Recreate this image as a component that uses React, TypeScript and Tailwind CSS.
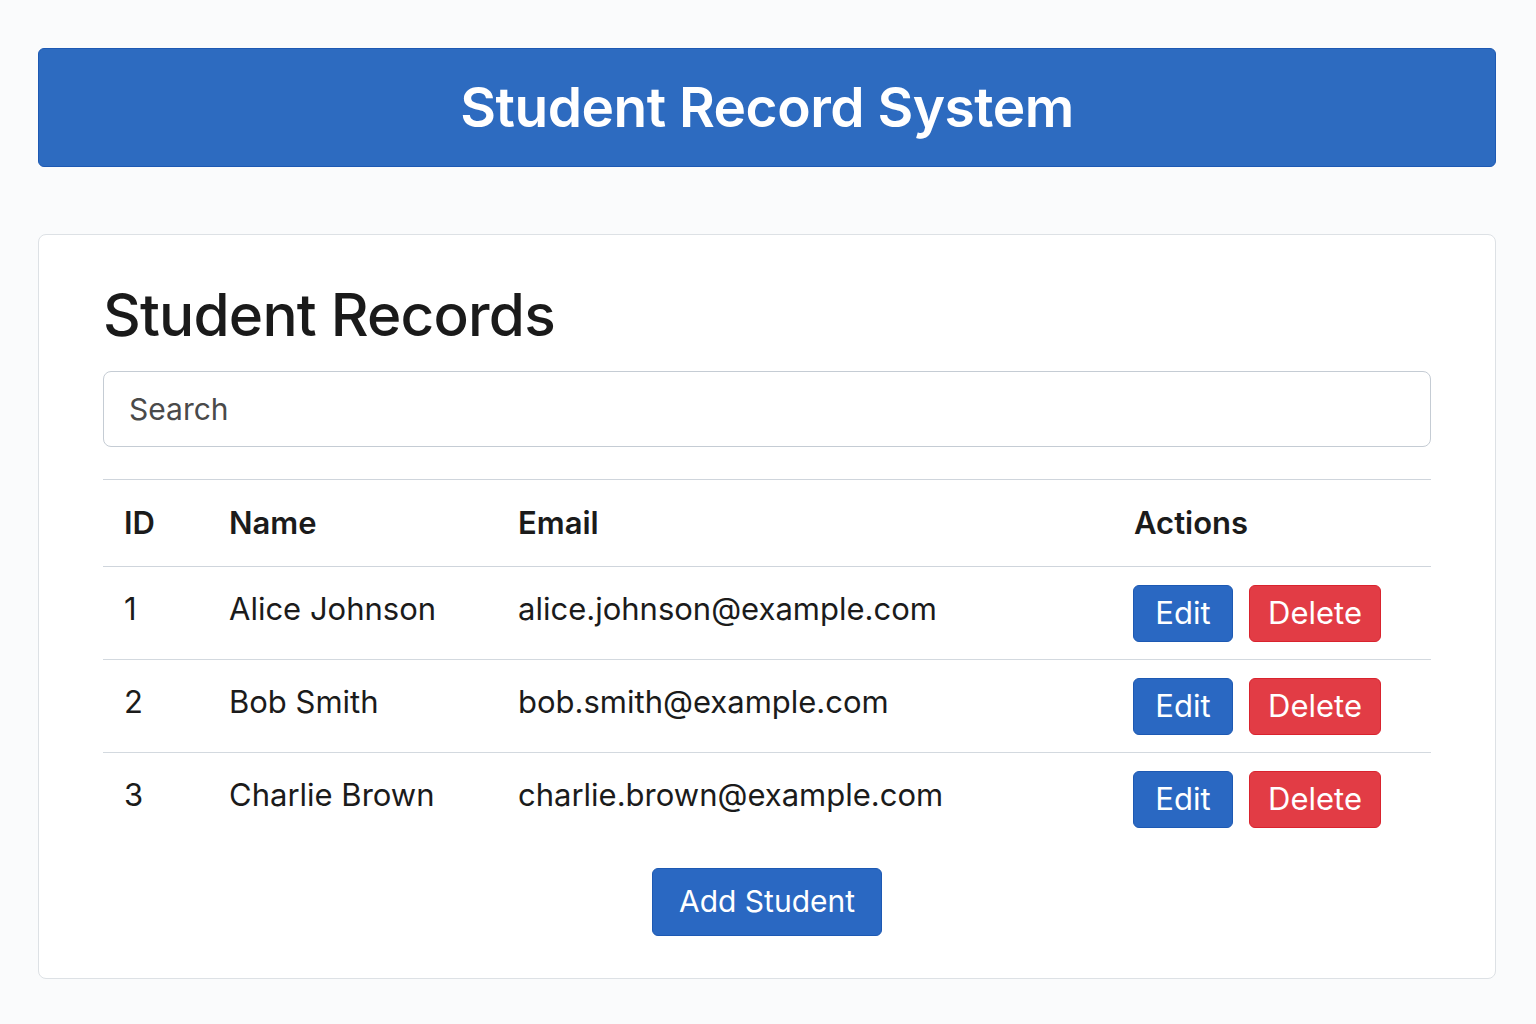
const students = [
    { id: 1, name: 'Alice Johnson', email: 'alice.johnson@example.com' },
    { id: 2, name: 'Bob Smith', email: 'bob.smith@example.com' },
    { id: 3, name: 'Charlie Brown', email: 'charlie.brown@example.com' },
];

export default function App() {
    return (
        <div className="min-h-screen bg-[#fafbfc] pl-[38px] pr-[40px] pt-[48px] pb-[46px] font-['Inter',_sans-serif] text-[#1b1b1b]">
            <header className="h-[119px] flex items-center justify-center rounded-[6px] border border-[#1d59b3] bg-[#2d6bc0]">
                <h1 className="text-[55px] font-semibold tracking-[-0.5px] text-white">Student Record System</h1>
            </header>

            <main className="mt-[67px] rounded-[8px] border border-[#dde1e5] bg-white px-[64px] pt-[44px] pb-[42px]">
                <h2 className="text-[58.5px] leading-[72px] font-medium tracking-[-0.8px] text-[#1a1a1a]">Student Records</h2>

                <input
                    type="text"
                    placeholder="Search"
                    className="mt-[20px] block w-full h-[76px] rounded-[8px] border border-[#c5ccd4] px-[25px] text-[30px] text-[#444] placeholder:text-[#4a4a4a] outline-none"
                />

                <table className="mt-[32px] w-full border-collapse text-[31px]">
                    <colgroup>
                        <col className="w-[105px]" />
                        <col className="w-[289px]" />
                        <col className="w-[616px]" />
                        <col />
                    </colgroup>
                    <thead>
                        <tr className="h-[87px] border-t border-b border-[#cfd5dc] text-left">
                            <th className="pl-[21px] font-semibold">ID</th>
                            <th className="pl-[21px] font-semibold">Name</th>
                            <th className="pl-[21px] font-semibold">Email</th>
                            <th className="pl-[21px] font-semibold">Actions</th>
                        </tr>
                    </thead>
                    <tbody>
                        {students.map((s, i) => (
                            <tr key={s.id} className={i < students.length - 1 ? 'h-[93px] border-b border-[#d3d9df]' : 'h-[93px]'}>
                                <td className="pl-[21px] pb-[8px]">{s.id}</td>
                                <td className="pl-[21px] pb-[8px]">{s.name}</td>
                                <td className="pl-[21px] pb-[8px]">{s.email}</td>
                                <td className="pl-[20px]">
                                    <div className="flex gap-[16px]">
                                        <button className="h-[57px] w-[100px] rounded-[6px] border border-[#1d59b3] bg-[#2a68c2] text-white">Edit</button>
                                        <button className="h-[57px] w-[132px] rounded-[6px] border border-[#d9232e] bg-[#e23c45] text-white">Delete</button>
                                    </div>
                                </td>
                            </tr>
                        ))}
                    </tbody>
                </table>

                <div className="mt-[22px] flex justify-center">
                    <button className="h-[68px] w-[230px] rounded-[6px] border border-[#1d59b3] bg-[#2a68c2] text-[30px] text-white">Add Student</button>
                </div>
            </main>
        </div>
    );
}
